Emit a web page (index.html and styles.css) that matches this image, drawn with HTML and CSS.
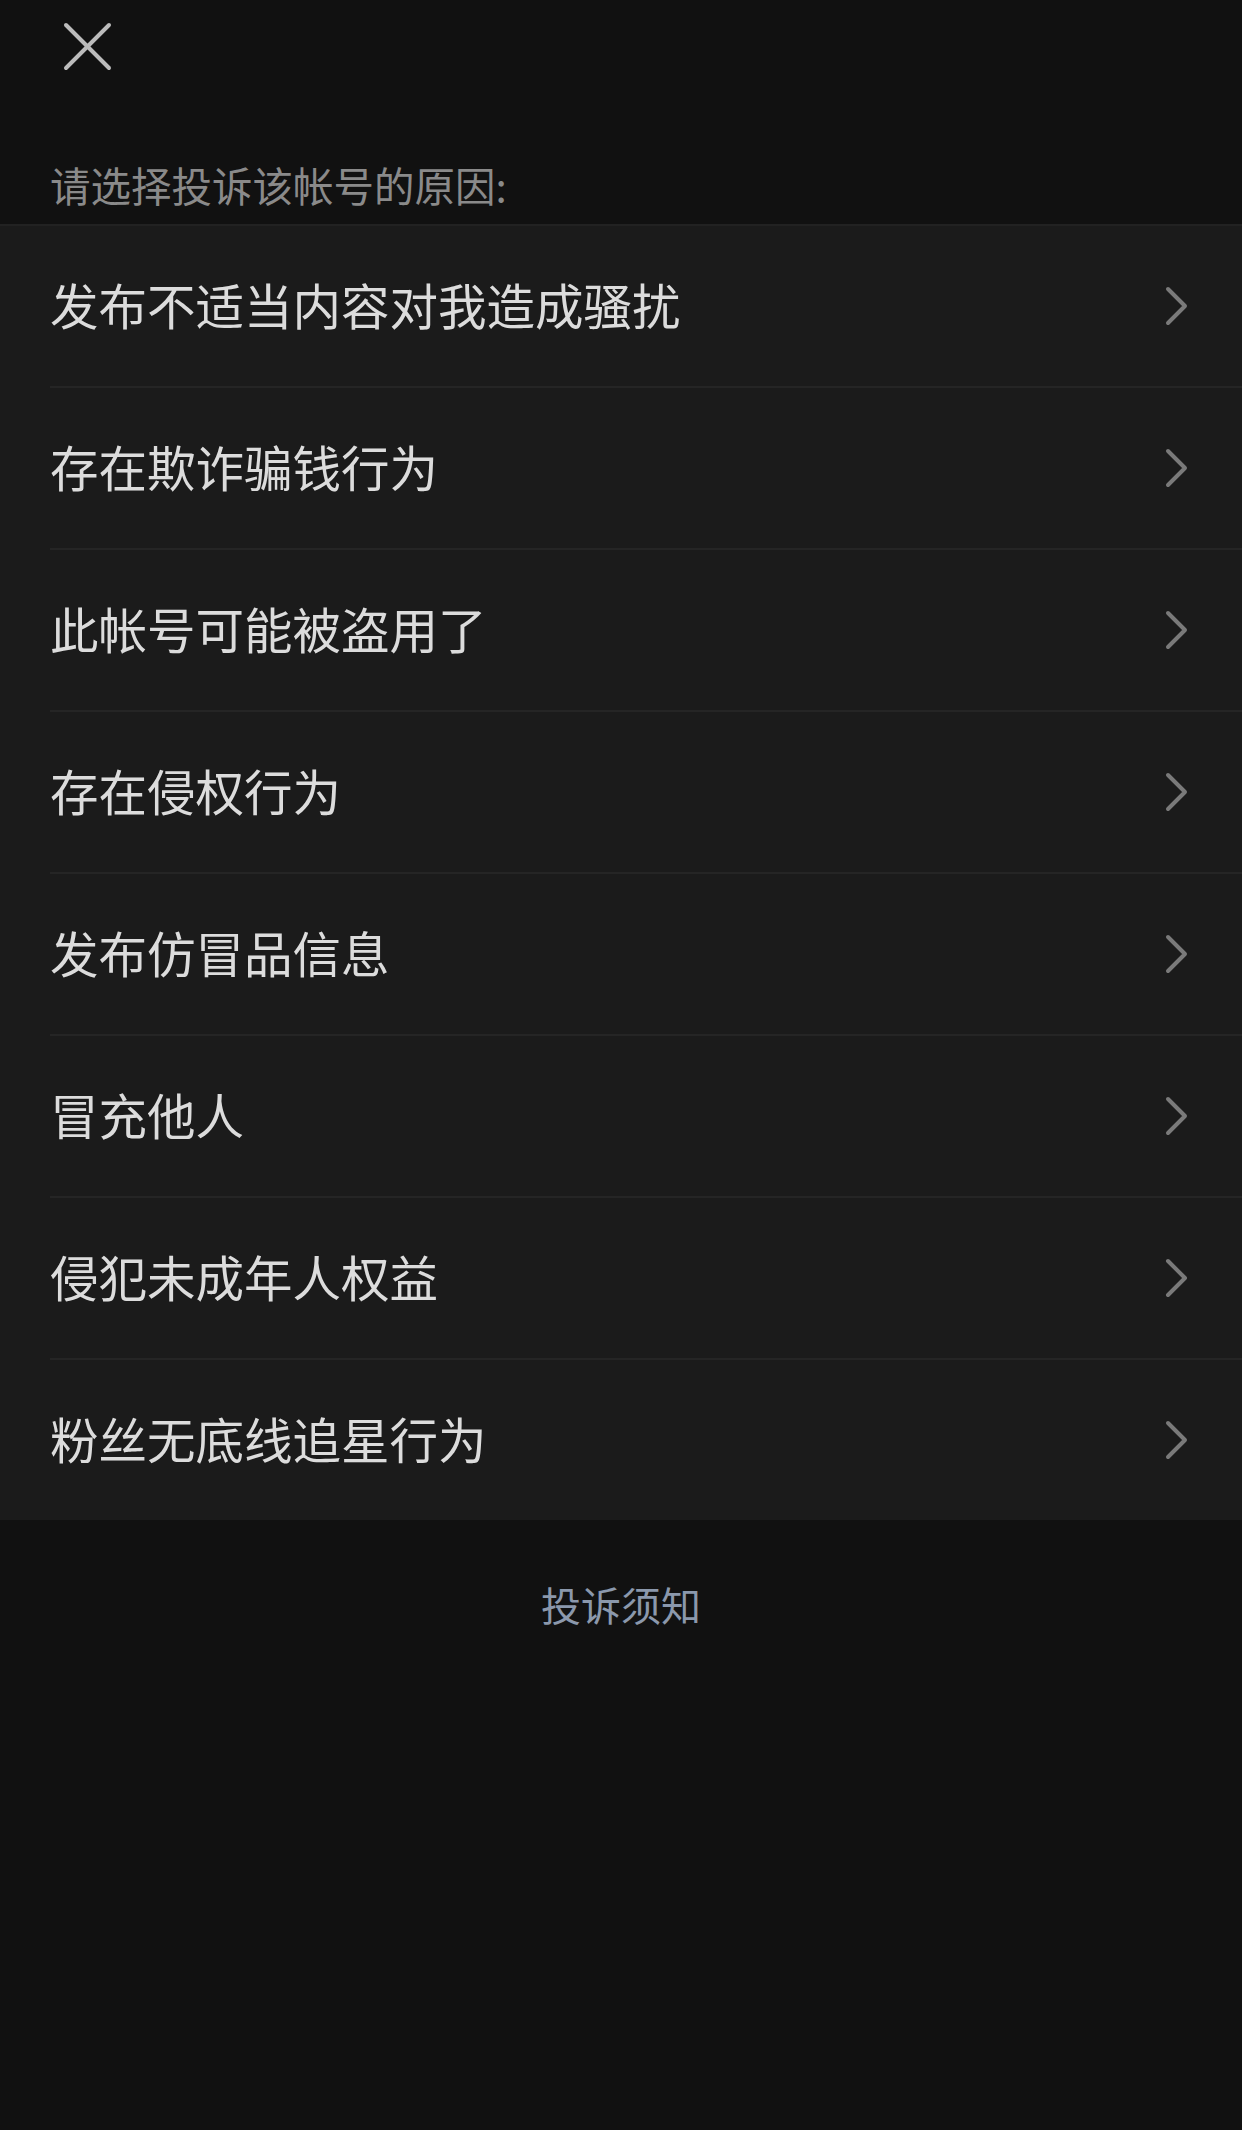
FILE: index.html
```html
<!DOCTYPE html>
<html lang="zh-CN">
<head>
    <meta charset="UTF-8">
    <meta name="viewport" content="width=device-width, initial-scale=1.0">
    <link rel="stylesheet" href="styles.css">
</head>
<body>
    <div class="page">
        <div class="top">
            <button class="close" aria-label="关闭">
                <svg width="49" height="49" viewBox="0 0 49 49">
                    <line x1="3" y1="3" x2="46" y2="46" />
                    <line x1="46" y1="3" x2="3" y2="46" />
                </svg>
            </button>
            <div class="title">请选择投诉该帐号的原因:</div>
        </div>
        <ul class="reasons">
            <li><div class="row"><span>发布不适当内容对我造成骚扰</span><svg class="chevron" width="24" height="40" viewBox="0 0 24 40"><polyline points="3,3 20,20 3,37" /></svg></div></li>
            <li><div class="row"><span>存在欺诈骗钱行为</span><svg class="chevron" width="24" height="40" viewBox="0 0 24 40"><polyline points="3,3 20,20 3,37" /></svg></div></li>
            <li><div class="row"><span>此帐号可能被盗用了</span><svg class="chevron" width="24" height="40" viewBox="0 0 24 40"><polyline points="3,3 20,20 3,37" /></svg></div></li>
            <li><div class="row"><span>存在侵权行为</span><svg class="chevron" width="24" height="40" viewBox="0 0 24 40"><polyline points="3,3 20,20 3,37" /></svg></div></li>
            <li><div class="row"><span>发布仿冒品信息</span><svg class="chevron" width="24" height="40" viewBox="0 0 24 40"><polyline points="3,3 20,20 3,37" /></svg></div></li>
            <li><div class="row"><span>冒充他人</span><svg class="chevron" width="24" height="40" viewBox="0 0 24 40"><polyline points="3,3 20,20 3,37" /></svg></div></li>
            <li><div class="row"><span>侵犯未成年人权益</span><svg class="chevron" width="24" height="40" viewBox="0 0 24 40"><polyline points="3,3 20,20 3,37" /></svg></div></li>
            <li><div class="row"><span>粉丝无底线追星行为</span><svg class="chevron" width="24" height="40" viewBox="0 0 24 40"><polyline points="3,3 20,20 3,37" /></svg></div></li>
        </ul>
        <div class="notice">投诉须知</div>
    </div>
</body>
</html>
```

FILE: styles.css
```css
body {
    margin: 0;
    padding: 0;
    background-color: #111111;
    font-family: "Noto Sans CJK SC", "Noto Sans", sans-serif;
    min-height: 2130px;
}

.page {
    display: flex;
    flex-direction: column;
}

.top {
    height: 224px;
    box-sizing: border-box;
    padding-top: 22px;
    display: flex;
    flex-direction: column;
}

.close {
    margin-left: 63px;
    width: 49px;
    height: 49px;
    padding: 0;
    border: none;
    background: none;
    display: block;
}

.close svg {
    display: block;
}

.close line {
    stroke: #bcbcbc;
    stroke-width: 4;
    stroke-linecap: round;
}

.title {
    margin-top: 86px;
    margin-left: 50px;
    font-size: 40.5px;
    line-height: 56px;
    color: #8a8a8a;
}

.reasons {
    list-style: none;
    margin: 0;
    padding: 0;
    background-color: #1b1b1b;
    border-top: 2px solid #222222;
}

.reasons li {
    padding-left: 50px;
}

.row {
    height: 162px;
    box-sizing: border-box;
    padding-bottom: 5px;
    display: flex;
    align-items: center;
    justify-content: space-between;
    padding-right: 53px;
    border-bottom: 2px solid #252525;
}

.row .chevron {
    margin-top: 5px;
}

.reasons li:last-child .row {
    border-bottom: none;
    height: 160px;
}

.row span {
    font-size: 48.5px;
    color: #dcdcdc;
}

.chevron polyline {
    fill: none;
    stroke: #7a7a7a;
    stroke-width: 4;
    stroke-linecap: round;
    stroke-linejoin: round;
}

.notice {
    margin-top: 56px;
    text-align: center;
    font-size: 40px;
    line-height: 56px;
    color: #8b98ac;
}
```
